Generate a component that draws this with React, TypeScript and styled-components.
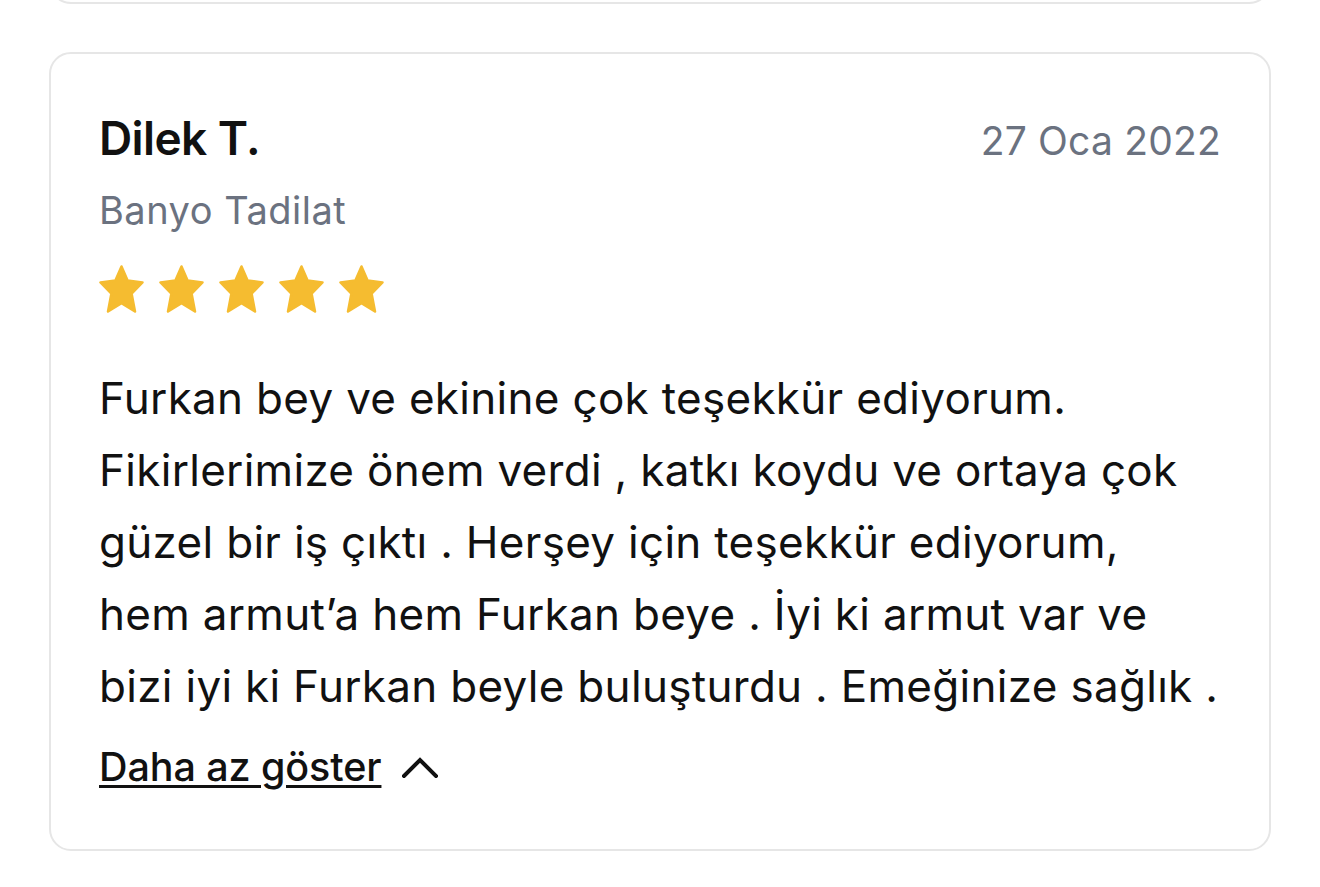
import styled, { createGlobalStyle } from 'styled-components';

interface Review {
  name: string;
  service: string;
  date: string;
  rating: number;
  lines: string[];
}

const review: Review = {
  name: 'Dilek T.',
  service: 'Banyo Tadilat',
  date: '27 Oca 2022',
  rating: 5,
  lines: [
    'Furkan bey ve ekinine çok teşekkür ediyorum.',
    'Fikirlerimize önem verdi , katkı koydu ve ortaya çok',
    'güzel bir iş çıktı . Herşey için teşekkür ediyorum,',
    'hem armut’a hem Furkan beye . İyi ki armut var ve',
    'bizi iyi ki Furkan beyle buluşturdu . Emeğinize sağlık .',
  ],
};

const Star = () => (
  <svg width="45" height="48" viewBox="0 0 45 48">
    <polygon
      points="22.5,1.5 28.6,15.6 43.5,17.4 32.6,28.6 36,46.5 22.5,38.2 9,46.5 12.4,28.6 1.5,17.4 16.4,15.6"
      fill="#F5BC30"
      stroke="#F5BC30"
      strokeWidth="2.5"
      strokeLinejoin="round"
    />
  </svg>
);

const ChevronUp = () => (
  <svg width="36" height="22" viewBox="0 0 36 22">
    <polyline
      points="2,20 18,4 34,20"
      fill="none"
      stroke="#111"
      strokeWidth="4"
      strokeLinecap="square"
    />
  </svg>
);

const ReviewCard = ({ name, service, date, rating, lines }: Review) => (
  <Card>
    <Header>
      <Name>{name}</Name>
      <DateText>{date}</DateText>
    </Header>
    <Service>{service}</Service>
    <Stars>
      {Array.from({ length: rating }).map((_, i) => (
        <Star key={i} />
      ))}
    </Stars>
    <Body>
      {lines.map((l, i) => (
        <span key={i}>{l}</span>
      ))}
    </Body>
    <ToggleRow>
      <ToggleLink>Daha az göster</ToggleLink>
      <ChevronUp />
    </ToggleRow>
  </Card>
);

export default function App() {
  return (
    <>
      <GlobalStyle />
      <Feed>
        <PrevCard />
        <ReviewCard {...review} />
      </Feed>
    </>
  );
}

const GlobalStyle = createGlobalStyle`
  html, body {
    margin: 0;
    padding: 0;
    background: #fff;
    overflow: hidden;
  }
  body {
    font-family: Inter, "Noto Sans", sans-serif;
    color: #111;
  }
`;

const Feed = styled.div`
  display: flex;
  flex-direction: column;
  gap: 48px;
  padding: 0 49px;
  margin-top: -200px;
`;

const Card = styled.div`
  display: flex;
  flex-direction: column;
  border: 2.5px solid #e6e6e6;
  border-radius: 22px;
  padding: 56px 48px 54px;
  background: #fff;
`;

const PrevCard = styled(Card)`
  height: 204px;
  box-sizing: border-box;
`;

const Header = styled.div`
  display: flex;
  justify-content: space-between;
  align-items: baseline;
`;

const Name = styled.div`
  font-size: 46px;
  line-height: 56px;
  font-weight: 600;
  letter-spacing: -0.6px;
  color: #111;
`;

const DateText = styled.div`
  font-size: 39px;
  line-height: 56px;
  letter-spacing: 0.2px;
  color: #6b7280;
`;

const Service = styled.div`
  margin-top: 16px;
  font-size: 38px;
  line-height: 50px;
  letter-spacing: 0.5px;
  color: #6b7280;
`;

const Stars = styled.div`
  display: flex;
  gap: 15px;
  margin-top: 30px;
`;

const Body = styled.p`
  display: flex;
  flex-direction: column;
  margin: 49px 0 0;
  font-size: 44px;
  line-height: 72px;
  letter-spacing: 0.3px;
  color: #111;
  white-space: nowrap;
`;

const ToggleRow = styled.div`
  display: flex;
  align-items: center;
  gap: 21px;
  margin-top: 17px;
`;

const ToggleLink = styled.span`
  font-size: 39.5px;
  line-height: 56px;
  font-weight: 500;
  letter-spacing: -0.1px;
  color: #111;
  text-decoration: underline;
  text-decoration-thickness: 3px;
  text-underline-offset: 4px;
`;
